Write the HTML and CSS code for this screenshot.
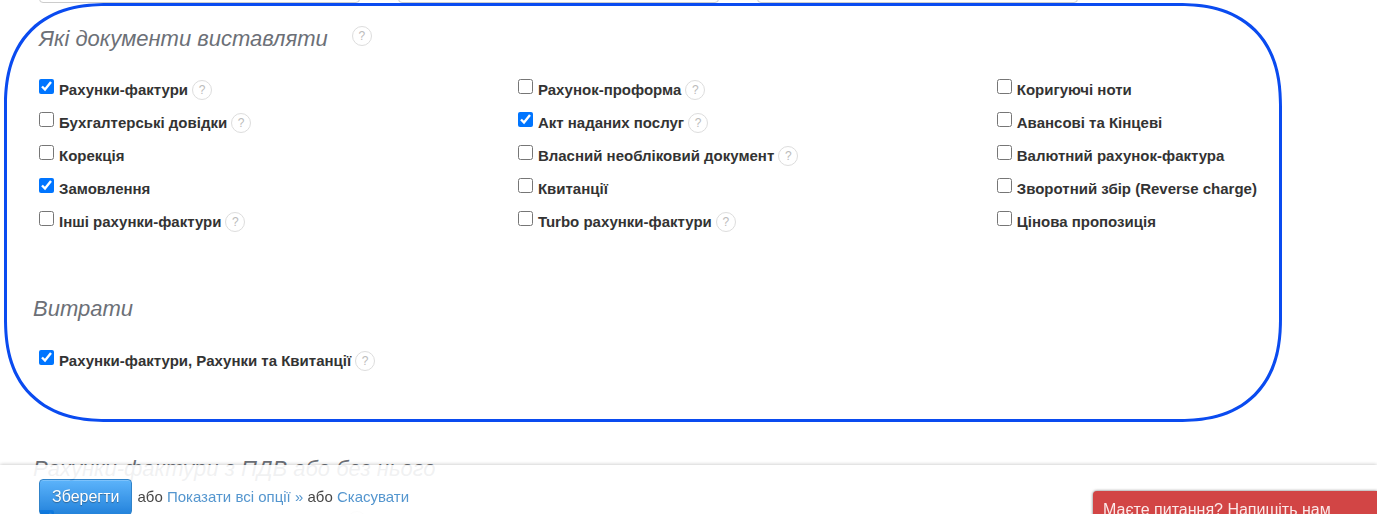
FILE: index.html
```html
<!DOCTYPE html>
<html lang="uk">
<head>
    <meta charset="UTF-8">
    <meta name="viewport" content="width=device-width, initial-scale=1.0">
    <title>Налаштування</title>
    <link rel="stylesheet" href="styles.css">
</head>
<body>
    <div class="fields">
        <input type="text" aria-label="Поле 1">
        <input type="text" aria-label="Поле 2">
        <input type="text" aria-label="Поле 3">
    </div>

    <div class="documents">
        <div class="title-row">
            <h2>Які документи виставляти</h2>
            <span class="help">?</span>
        </div>
        <div class="options">
            <div class="option"><input type="checkbox" id="invoice" checked><label for="invoice">Рахунки-фактури</label><span class="help">?</span></div>
            <div class="option"><input type="checkbox" id="proforma"><label for="proforma">Рахунок-проформа</label><span class="help">?</span></div>
            <div class="option"><input type="checkbox" id="notes"><label for="notes">Коригуючі ноти</label></div>

            <div class="option"><input type="checkbox" id="accounting"><label for="accounting">Бухгалтерські довідки</label><span class="help">?</span></div>
            <div class="option"><input type="checkbox" id="act" checked><label for="act">Акт наданих послуг</label><span class="help">?</span></div>
            <div class="option"><input type="checkbox" id="advance"><label for="advance">Авансові та Кінцеві</label></div>

            <div class="option"><input type="checkbox" id="correction"><label for="correction">Корекція</label></div>
            <div class="option"><input type="checkbox" id="own"><label for="own">Власний необліковий документ</label><span class="help">?</span></div>
            <div class="option"><input type="checkbox" id="currency"><label for="currency">Валютний рахунок-фактура</label></div>

            <div class="option"><input type="checkbox" id="order" checked><label for="order">Замовлення</label></div>
            <div class="option"><input type="checkbox" id="receipt"><label for="receipt">Квитанції</label></div>
            <div class="option"><input type="checkbox" id="reverse"><label for="reverse">Зворотний збір (Reverse charge)</label></div>

            <div class="option"><input type="checkbox" id="other"><label for="other">Інші рахунки-фактури</label><span class="help">?</span></div>
            <div class="option"><input type="checkbox" id="turbo"><label for="turbo">Turbo рахунки-фактури</label><span class="help">?</span></div>
            <div class="option"><input type="checkbox" id="offer"><label for="offer">Цінова пропозиція</label></div>
        </div>

        <h2 class="costs-title">Витрати</h2>
        <div class="option"><input type="checkbox" id="costs" checked><label for="costs">Рахунки-фактури, Рахунки та Квитанції</label><span class="help">?</span></div>
    </div>

    <div class="vat">
        <h2>Рахунки-фактури з ПДВ або без нього</h2>
        <div class="option"><input type="checkbox" id="vat" checked><label for="vat">Рахунки-фактури з ПДВ або без нього</label><span class="help">?</span></div>
    </div>

    <div class="actions">
        <button type="submit" class="save">Зберегти</button>
        <span>або <a href="#">Показати всі опції »</a> або <a href="#">Скасувати</a></span>
    </div>

    <button type="button" class="chat">Маєте питання? Напишіть нам</button>
</body>
</html>
```

FILE: styles.css
```css
body {
    margin: 0;
    overflow: hidden;
    background-color: #fff;
    color: #333;
    font-family: "Liberation Sans", Arial, sans-serif;
    font-size: 15px;
}
h2 {
    margin: 0;
    color: #6c7077;
    font-size: 22px;
    font-style: italic;
    font-weight: normal;
    line-height: 28px;
}

/* text fields */
.fields {
    display: grid;
    grid-template-columns: repeat(3, 1fr);
    gap: 38px;
    margin: -31px 299px 0 39px;
}
.fields input {
    box-sizing: border-box;
    width: 100%;
    height: 34px;
    border: 1px solid #ccc;
    border-radius: 4px;
}

/* documents */
.documents {
    box-sizing: border-box;
    margin: 0 95px 0 4px;
    padding: 19px 21px 42px 32px;
    border: 3px solid #0a4bf0;
    border-radius: 104px;
    corner-shape: superellipse(1.27);
}
.title-row {
    display: flex;
    align-items: center;
    gap: 24px;
    margin-bottom: 20px;
}
.title-row .help {
    margin: 0 0 6px;
}
.options {
    display: grid;
    grid-template-columns: 11fr 11fr 6fr;
    margin-bottom: 57px;
}
.option {
    display: flex;
    align-items: center;
    height: 33px;
    font-weight: bold;
    white-space: nowrap;
}
.option input {
    width: 15px;
    height: 15px;
    margin: 0 5px 7px 0;
}
.help {
    box-sizing: border-box;
    width: 20px;
    height: 20px;
    margin-left: 4px;
    border: 1px solid #ddd;
    border-radius: 50%;
    color: #bbb;
    font-size: 12px;
    font-weight: normal;
    line-height: 18px;
    text-align: center;
}
.costs-title {
    margin: 0 0 21px -6px;
}
.vat {
    padding: 33px 39px 0;
}
.vat h2 {
    margin: 0 0 21px -6px;
}

/* bottom bar */
.actions {
    position: fixed;
    right: 0;
    bottom: 0;
    left: 0;
    display: flex;
    align-items: center;
    gap: 5px;
    box-sizing: border-box;
    height: 49px;
    padding: 14px 39px 0;
    background-color: #fff;
    box-shadow: 0 0 4px rgba(0, 0, 0, 0.3);
    opacity: 0.9;
}
.actions a {
    color: #428bca;
    text-decoration: none;
}
.save {
    height: 36px;
    padding: 0 12px;
    border: 1px solid #1a76c4;
    border-radius: 4px;
    background: linear-gradient(#4bacfb, #0d76d8);
    box-shadow: inset 0 1px 0 rgba(255, 255, 255, 0.2);
    color: #fff;
    font-family: inherit;
    font-size: 16px;
    text-shadow: 0 1px 1px rgba(0, 0, 0, 0.4);
    cursor: pointer;
}
.chat {
    position: fixed;
    right: 0;
    bottom: -12px;
    width: 284px;
    height: 35px;
    padding: 3px 10px 0;
    border: 0;
    border-top-left-radius: 4px;
    background-color: #d24545;
    box-shadow: 0 0 3px rgba(0, 0, 0, 0.6);
    color: #fbe9e9;
    font-family: inherit;
    font-size: 16px;
    text-align: left;
    cursor: pointer;
}
```
